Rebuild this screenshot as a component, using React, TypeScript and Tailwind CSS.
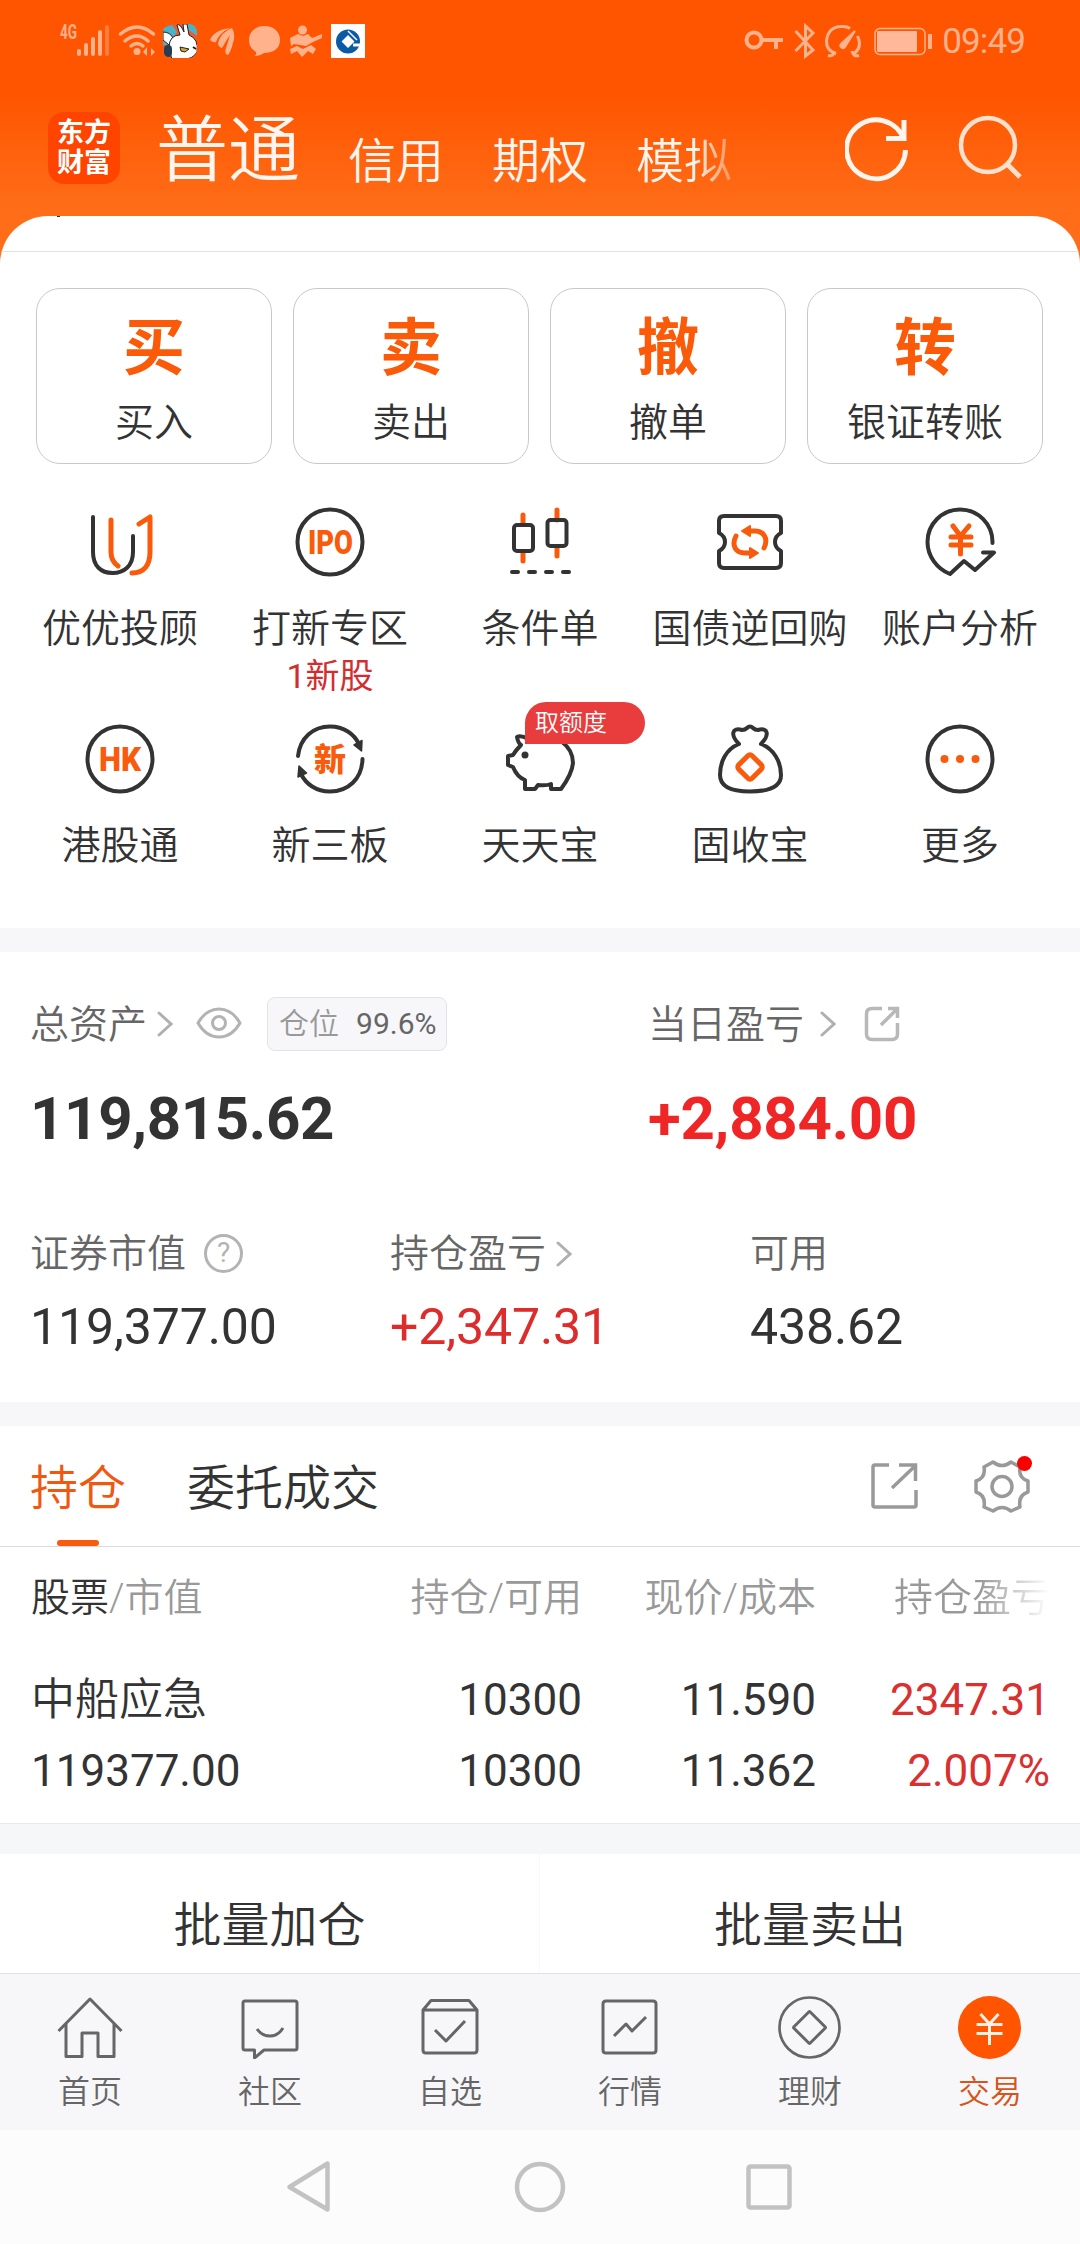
import type { ReactNode } from 'react'

const DARK = '#333333'
const ORANGE = '#f95a0b'

const quickActions = [
  { mark: '买', label: '买入' },
  { mark: '卖', label: '卖出' },
  { mark: '撤', label: '撤单' },
  { mark: '转', label: '银证转账' }
]

type Service = { label: string; note?: string; badge?: string; icon: ReactNode }

const services: Service[] = [
  {
    label: '优优投顾',
    icon: (
      <>
        <path d="M9 11V46C9 60 17 67 28.500 67S49 60 49 46V30" stroke={DARK} />
        <path d="M27 14V46Q27 55 34 60" stroke={ORANGE} strokeWidth="5" />
        <path d="M55 18L66 11V46C66 59 60 67 48 67" stroke={ORANGE} strokeWidth="5" />
      </>
    )
  },
  {
    label: '打新专区',
    note: '1新股',
    icon: (
      <>
        <circle cx="36" cy="36" r="32.500" stroke={DARK} />
        <text x="36.500" y="47.500" textAnchor="middle" fontFamily="Roboto, sans-serif" fontWeight="900" fontSize="33" textLength="45" lengthAdjust="spacingAndGlyphs" fill={ORANGE}>IPO</text>
      </>
    )
  },
  {
    label: '条件单',
    icon: (
      <>
        <path d="M19 9V17M19 47V55M53 4V14M53 42V50" stroke={ORANGE} strokeWidth="5" />
        <rect x="10" y="19" width="19" height="26" rx="3" stroke={DARK} />
        <rect x="43.500" y="14" width="19" height="26" rx="3" stroke={DARK} />
        <path d="M8 66H14M25 66H31M42 66H48M59 66H65" stroke={DARK} />
      </>
    )
  },
  {
    label: '国债逆回购',
    icon: (
      <>
        <path d="M10 10H62Q67 10 67 15V27Q61 30 61 36T67 45V57Q67 62 62 62H10Q5 62 5 57V45Q11 42 11 36T5 27V15Q5 10 10 10Z" stroke={DARK} />
        <path d="M50 42C55 32 49 25 41 25H34" stroke={ORANGE} strokeWidth="5" />
        <path d="M22 30C17 40 22 47 31 47H38" stroke={ORANGE} strokeWidth="5" />
        <path d="M36 20V30L28 25ZM36 42V52L44 47Z" fill={ORANGE} stroke={ORANGE} strokeWidth="2" />
      </>
    )
  },
  {
    label: '账户分析',
    icon: (
      <>
        <path d="M68.500 37C69 18 54 3.500 36 3.500S3.500 18 3.500 36C3.500 50 13 63 26 68L40 55L51 64L70 46.500H59" stroke={DARK} />
        <path d="M29 20L36.500 30L45 20M36.500 30V48M27 31H47M27 39H47" stroke={ORANGE} strokeWidth="5" />
      </>
    )
  },
  {
    label: '港股通',
    icon: (
      <>
        <circle cx="36" cy="36" r="32.500" stroke={DARK} />
        <text x="36" y="47.500" textAnchor="middle" fontFamily="Roboto, sans-serif" fontWeight="900" fontSize="33" textLength="42" lengthAdjust="spacingAndGlyphs" fill={ORANGE}>HK</text>
      </>
    )
  },
  {
    label: '新三板',
    icon: (
      <>
        <path d="M4 33C6 15 19 3.500 36 3.500C50 3.500 60 11 65 21" stroke={DARK} />
        <path d="M68.500 36C68 56 54 68.500 36 68.500C22 68.500 12 61 7 51" stroke={DARK} />
        <path d="M60 22L68 17.500L67.500 28ZM12.500 50L4 54L5 43Z" fill={DARK} stroke={DARK} strokeWidth="1.500" />
        <text x="36" y="47.500" textAnchor="middle" fontFamily="'Noto Sans CJK SC', sans-serif" fontWeight="900" fontSize="32" fill={ORANGE}>新</text>
      </>
    )
  },
  {
    label: '天天宝',
    badge: '取额度',
    icon: (
      <>
        <path d="M24 16Q17 12 13 14Q14 20 17 22Q12 27 9 32L4 33V42L9 44Q13 54 21 57V66H31L34 62Q42 63 47 61V66H57Q68 51 69 40Q69 27 58 19Z" stroke={DARK} />
        <circle cx="21" cy="32" r="3.500" fill={DARK} />
      </>
    )
  },
  {
    label: '固收宝',
    icon: (
      <>
        <path d="M25 21C16 12 18 4 28 7Q31 7 33 5Q36 2 39 5Q41 7 44 7C54 4 56 12 47 21C60 26 67 39 67 52C67 64 55 68.500 36 68.500S6 64 6 52C6 39 12 26 25 21Z" stroke={DARK} />
        <rect x="-9.500" y="-9.500" width="19" height="19" rx="3" transform="translate(36 44) rotate(45)" stroke={ORANGE} strokeWidth="5" />
      </>
    )
  },
  {
    label: '更多',
    icon: (
      <>
        <circle cx="36" cy="36" r="32.500" stroke={DARK} />
        <g fill={ORANGE}>
          <circle cx="20.500" cy="36" r="4" />
          <circle cx="36" cy="36" r="4" />
          <circle cx="51.500" cy="36" r="4" />
        </g>
      </>
    )
  }
]

const tabs = [
  {
    label: '首页',
    icon: <path d="M1.500 35L33 3L64.500 35M9 28V60.500H25V37H41V60.500H57V28" />
  },
  {
    label: '社区',
    icon: <path d="M8 5H58Q60 5 60 7V52Q60 54 58 54H27L17.500 62V54H8Q6 54 6 52V7Q6 5 8 5ZM20 33Q25 40 33 40T46 32" />
  },
  {
    label: '自选',
    icon: <path d="M6 14L14 4.500H52L60 14V54Q60 57 57 57H9Q6 57 6 54ZM6 14H60M18 34L29 45L48 25" />
  },
  {
    label: '行情',
    icon: <path d="M9 5H56Q59 5 59 8V54Q59 57 56 57H9Q6 57 6 54V8Q6 5 9 5ZM17 40L29 28L35 35L49 21" />
  },
  {
    label: '理财',
    icon: (
      <>
        <circle cx="32.500" cy="31.500" r="30" strokeWidth="2.700" />
        <rect x="-11.500" y="-11.500" width="23" height="23" rx="1" transform="translate(32.500 31.500) rotate(45)" />
      </>
    )
  },
  {
    label: '交易',
    active: true,
    icon: (
      <>
        <circle cx="32.500" cy="31.500" r="31.500" fill="#ff5500" stroke="none" />
        <path d="M23.500 18L32.500 28L41.500 18M32.500 28V49M19.500 28.500H45.500M19.500 37.500H45.500" stroke="#fff0e6" />
      </>
    )
  }
]

function Chevron({ className = '' }: { className?: string }) {
  return (
    <svg className={className} width="16" height="26" viewBox="0 0 16 26" fill="none" stroke="#b0b0b0" strokeWidth="3" strokeLinecap="round">
      <path d="M2 2L14 13L2 24" />
    </svg>
  )
}

function StatusBar() {
  return (
    <div className="flex h-[82px] items-center justify-between pl-[48px] pr-[55px]">
      <svg width="318" height="60" viewBox="48 11 318 60" fill="#ffb28c">
        <text x="60" y="39" fontFamily="Roboto, sans-serif" fontWeight="700" fontSize="20" textLength="17" lengthAdjust="spacingAndGlyphs">4G</text>
        <rect x="77" y="49" width="4" height="7" rx="2" />
        <rect x="84" y="43" width="4" height="13" rx="2" />
        <rect x="91" y="37" width="4" height="19" rx="2" />
        <rect x="98" y="30" width="4" height="26" rx="2" />
        <rect x="105" y="25" width="4" height="31" rx="2" opacity=".45" />
        <path d="M120.500 34Q137 20 153.500 34M125 41Q137 31 148 41M131 46Q137 41 143 46" fill="none" stroke="#ffb28c" strokeWidth="3.500" strokeLinecap="round" />
        <circle cx="137" cy="51.500" r="3.500" />
        <path d="M143 52L147 47V56ZM155 52L151 48V56Z" />
        {/* rabbit app */}
        <clipPath id="app"><rect x="163" y="24" width="34" height="34" rx="8" /></clipPath>
        <g clipPath="url(#app)">
          <rect x="163" y="24" width="34" height="34" fill="#ed5b2a" />
          <path d="M163 28L172 25L177 32L167 45H163ZM186 24H197V36L189 30Z" fill="#48b4c9" />
          <path d="M163 32Q170 32 173 38L169 45L163 40Z" fill="#fff" stroke="#222" />
          <path d="M180 35L177 25Q180 23 184 32L183 24H187L189 35Q199 39 197 52Q193 59 184 59H172Q166 45 172 38Q175 35 180 35Z" fill="#fff" stroke="#222" />
          <rect x="164" y="45" width="8" height="12" rx="4" fill="#263e55" />
          <path d="M180 47L189 49L185 52L181 51Z" fill="#d8a72a" stroke="#222" />
          <path d="M193 47L196 49" stroke="#222" strokeWidth="2" />
        </g>
        <path d="M210 40Q214 30 230 28Q219 33 216 42Q213 43 210 40ZM218 43Q221 32 232 28Q236 35 233 43Q231 51 228 55Q224 54 226 48Q228 42 230 35Q226 41 222 48Q218 47 218 43Z" />
        <path d="M264.500 26C255 26 249 32 249 40C249 45 251 49 256 52Q257 55 254 56Q260 56 264 53C274 53 280 48 280 40C280 32 274 26 264.500 26Z" />
        <circle cx="302.500" cy="30" r="4.500" />
        <path d="M290 38L298 34L303 36L308 34L312 38L322 34V38L313 42L306 46L294 44L291 46ZM290 49L297 46L303 49L311 45L316 49L313 54L308 51L302 57L297 51L291 54Z" />
        <rect x="331" y="24" width="34" height="34" fill="#fff" />
        <circle cx="348" cy="41.500" r="12" fill="#0b5aa5" />
        <path d="M348 35L354.500 41.500L348 48L341.500 41.500ZM353 43.500H362V46.500H353Z" fill="#fff" />
        <path d="M348 31L357 40" stroke="#fff" strokeWidth="1.500" />
      </svg>
      <div className="flex items-center gap-[8px]">
        <svg width="190" height="36" viewBox="744 23 190 36" fill="none" stroke="#ffb28c" strokeWidth="4">
          <circle cx="754" cy="40" r="7.500" />
          <path d="M762 40H783M776 40V49" />
          <path d="M795.500 31L813 50L805.500 56V26L813 33L795.500 51" strokeWidth="3" />
          <path d="M836 54Q826 50 826.500 41Q828 27 841 26.500Q847 26 850 28.500M857.500 36Q863 48 853 54M828 55.500Q834 57 834 51M859 55.500Q853 57 852 51" strokeWidth="3" />
          <path d="M855 31L845 47A2.500 2.500 0 1 1 841 44Z" fill="#ffb28c" strokeWidth="2" />
          <rect x="875" y="28.500" width="50" height="26" rx="5" strokeWidth="1.500" />
          <rect x="877" y="31" width="40" height="21" rx="1" fill="#ffb899" stroke="none" />
          <path d="M930 34V49" />
        </svg>
        <span className="text-[35px] leading-none tracking-[-0.9px] text-[#ffb28c]">09:49</span>
      </div>
    </div>
  )
}

function Header() {
  return (
    <header className="flex h-[134px] items-start pl-[48px] pt-[30px] text-[#fff5ee]">
      <div className="flex size-[72px] flex-col items-center justify-center rounded-[16px] bg-[#ff4400] text-[27px] font-bold leading-[30px] text-white">
        <span>东方</span>
        <span>财富</span>
      </div>
      <div className="ml-[36px] flex font-[350]">
        <span className="pt-[4px] text-[72px] leading-[70px]">普通</span>
        <div className="flex gap-[48px] pl-[48px] pt-[26px] text-[48px] leading-[48px]">
          <span>信用</span>
          <span>期权</span>
          <span className="bg-[linear-gradient(90deg,#fff5ee_60%,#ff9d66_95%)] bg-clip-text text-transparent">模拟</span>
        </div>
      </div>
      <svg className="ml-[113px] mt-[3px]" width="180" height="72" viewBox="844 115 180 72" fill="none" strokeWidth="5">
        <path d="M903 140A29.500 29.500 0 1 0 904.500 150" stroke="#fff5ee" />
        <path d="M903 120V138.500H885" stroke="#fff5ee" />
        <circle cx="987" cy="145" r="27" stroke="#ffe0cc" strokeWidth="4.500" />
        <path d="M1006 164L1019 177" stroke="#ffe0cc" />
      </svg>
    </header>
  )
}

function ServiceItem({ label, note, badge, icon }: Service) {
  return (
    <div className="relative flex flex-col items-center whitespace-nowrap font-[350]">
      <svg className="overflow-visible" width="72" height="72" viewBox="0 0 72 72" fill="none" strokeWidth="4" strokeLinecap="round" strokeLinejoin="round">
        {icon}
      </svg>
      <span className="mt-[31px] text-[39px] leading-[40px]">{label}</span>
      {note && <span className="mt-[10px] text-[34px] font-normal leading-[34px] text-[#d02f2f]">{note}</span>}
      {badge && (
        <span className="absolute left-[90px] top-[-21px] h-[42px] w-[120px] rounded-[21px] rounded-bl-none bg-[#e93c3c] pl-[10px] text-[24px] leading-[43px] text-white">
          {badge}
        </span>
      )}
    </div>
  )
}

function Assets() {
  return (
    <section className="h-[450px] px-[30px] pt-[44px] text-[39px] leading-none text-[#666]">
      <div className="flex">
        <div className="w-[618px]">
          <div className="flex h-[56px] items-center">
            <span className="pt-[2px] font-[350]">总资产</span>
            <Chevron className="ml-[10px]" />
            <svg className="mb-[2px] ml-[23px]" width="46" height="32" viewBox="0 0 46 32" fill="none" stroke="#b3b3b3" strokeWidth="3">
              <path d="M2 16Q10 2 23 2T44 16Q36 30 23 30T2 16Z" />
              <circle cx="23" cy="16" r="6.500" />
            </svg>
            <div className="ml-[25px] flex h-[54px] w-[180px] items-center rounded-[8px] border border-[#e3e3e6] bg-[#f7f7fa] pl-[11px] text-[30px]">
              <span className="font-[350] text-[#999]">仓位</span>
              <span className="ml-[17px]">99.6%</span>
            </div>
          </div>
          <div className="mt-[37px] text-[60px] font-bold leading-[60px] tracking-[-0.35px] text-[#333]">119,815.62</div>
        </div>
        <div>
          <div className="flex h-[56px] items-center">
            <span className="pt-[2px] font-[350]">当日盈亏</span>
            <Chevron className="ml-[16px]" />
            <svg className="ml-[28px]" width="36" height="36" viewBox="0 0 36 36" fill="none" stroke="#b8b8b8" strokeWidth="3.500">
              <path d="M18 2.500H8Q2.500 2.500 2.500 8V28Q2.500 33.500 8 33.500H28Q33.500 33.500 33.500 28V17M24 2.500H33.500V12M33 3L17 19" />
            </svg>
          </div>
          <div className="mt-[37px] text-[60px] font-bold leading-[60px] tracking-[-0.25px] text-[#f02626]">+2,884.00</div>
        </div>
      </div>

      <div className="mt-[85px] grid grid-cols-[360px_360px_1fr]">
        <div>
          <div className="flex h-[40px] items-center">
            <span className="font-[350]">证券市值</span>
            <span className="mb-[2px] ml-[18px] flex size-[39px] items-center justify-center rounded-full border-[3px] border-[#b3b3b3] text-[28px] text-[#b3b3b3]">?</span>
          </div>
          <div className="mt-[28px] text-[50px] tracking-[-0.1px] text-[#333]">119,377.00</div>
        </div>
        <div>
          <div className="flex h-[40px] items-center">
            <span className="font-[350]">持仓盈亏</span>
            <Chevron className="ml-[10px]" />
          </div>
          <div className="mt-[28px] text-[50px] tracking-[-0.1px] text-[#dd2c2c]">+2,347.31</div>
        </div>
        <div>
          <div className="flex h-[40px] items-center">
            <span className="font-[350]">可用</span>
          </div>
          <div className="mt-[28px] text-[50px] tracking-[-0.1px] text-[#333]">438.62</div>
        </div>
      </div>
    </section>
  )
}

function Positions() {
  return (
    <section className="h-[397px]">
      <div className="flex h-[121px] items-end justify-between border-b border-[#dcdcdc] pl-[30px] pr-[46px] text-[48px] font-[350] leading-none">
        <div className="flex gap-[61px]">
          <div className="flex flex-col items-center">
            <span className="text-[#f0570f]">持仓</span>
            <span className="mt-[27px] h-[6px] w-[42px] rounded-full bg-[#f95a0b]" />
          </div>
          <span>委托成交</span>
        </div>
        <svg className="mb-[29px]" width="164" height="62" viewBox="870 1455 164 62" fill="none" stroke="#999" strokeWidth="3.500">
          <path d="M889 1465H875Q873 1465 873 1467V1505Q873 1507 875 1507H914Q916 1507 916 1505V1490M899 1465H915.500V1481M915 1466L892 1488" />
          <path d="M984 1467L993 1462Q1002 1469 1011 1462L1020 1467Q1018 1478 1028 1481V1492Q1018 1495 1020 1507L1011 1511Q1002 1504 993 1511L984 1507Q986 1495 976 1492V1481Q986 1478 984 1467Z" strokeLinejoin="round" />
          <circle cx="1002" cy="1486.500" r="10" />
          <circle cx="1024.500" cy="1463.500" r="7.500" fill="#fb0000" stroke="none" />
        </svg>
      </div>
      <div className="grid grid-cols-[1fr_190px_234px_234px] pl-[31px] pr-[30px] text-right text-[44px] leading-none">
        <div className="text-left text-[39px] font-[350] leading-[102px] text-[#999]"><span className="text-[#333]">股票</span>/市值</div>
        <div className="text-[39px] font-[350] leading-[102px] text-[#999]">持仓/可用</div>
        <div className="text-[39px] font-[350] leading-[102px] text-[#999]">现价/成本</div>
        <div className="text-[39px] font-[350] leading-[102px]">
          <span className="bg-[linear-gradient(90deg,#999_55%,#fff_100%)] bg-clip-text text-transparent">持仓盈亏</span>
        </div>
        <div className="text-left font-[350] leading-[102px]">中船应急</div>
        <div className="leading-[102px]">10300</div>
        <div className="leading-[102px]">11.590</div>
        <div className="leading-[102px] text-[#d93030]">2347.31</div>
        <div className="text-left leading-[40px]">119377.00</div>
        <div className="leading-[40px]">10300</div>
        <div className="leading-[40px]">11.362</div>
        <div className="leading-[40px] text-[#d93030]">2.007%</div>
      </div>
    </section>
  )
}

function TabBar() {
  return (
    <nav className="grid h-[157px] grid-cols-6 border-t border-[#e0e0e2] bg-[#f7f7fa] pt-[22px]">
      {tabs.map((tab) => (
        <div key={tab.label} className="flex flex-col items-center">
          <svg width="66" height="63" viewBox="0 0 66 63" fill="none" stroke="#666" strokeWidth="3" strokeLinejoin="round">
            {tab.icon}
          </svg>
          <span className={tab.active ? 'mt-[17px] text-[32px] font-[350] leading-[32px] text-[#d4561a]' : 'mt-[17px] text-[32px] font-[350] leading-[32px] text-[#666]'}>
            {tab.label}
          </span>
        </div>
      ))}
    </nav>
  )
}

export default function App() {
  return (
    <div className="flex h-[2244px] w-[1080px] flex-col overflow-hidden bg-[linear-gradient(180deg,#ff5500_93px,#ff6d18_210px)] font-['Roboto','Noto_Sans_CJK_SC',sans-serif] text-[#333]">
      <StatusBar />
      <Header />
      <main className="flex flex-1 flex-col overflow-hidden rounded-t-[48px] bg-white">
        <div className="h-[36px] shrink-0 border-b border-[#e2e2e2] pl-[57px]">
          <div className="h-[1px] w-[3px] bg-[#333]" />
        </div>

        <div className="grid grid-cols-4 gap-[21px] pl-[36px] pr-[37px] pt-[36px]">
          {quickActions.map((action) => (
            <div key={action.label} className="flex h-[176px] flex-col items-center rounded-[24px] border border-[#c9c9c9] pt-[28px]">
              <span className="text-[62px] font-bold leading-[64px] text-[#fb5a08]">{action.mark}</span>
              <span className="mt-[22px] text-[39px] font-[350] leading-[40px]">{action.label}</span>
            </div>
          ))}
        </div>

        <div className="mt-[42px] grid h-[422px] shrink-0 grid-cols-5 grid-rows-[217px_205px] px-[15px]">
          {services.map((service) => (
            <ServiceItem key={service.label} {...service} />
          ))}
        </div>

        <div className="h-[24px] shrink-0 bg-[#f7f7fa]" />
        <Assets />
        <div className="h-[24px] shrink-0 bg-[#f7f7fa]" />
        <Positions />
        <div className="h-[31px] shrink-0 border-t border-[#e8e8ea] bg-[#f6f7f9]" />

        <div className="grid h-[119px] grid-cols-2 text-center text-[48px] font-[350] leading-[144px]">
          <div className="h-[119px] border-r border-[#f8f8f9]">批量加仓</div>
          <div>批量卖出</div>
        </div>
        <TabBar />
        <div className="flex h-[114px] justify-center bg-[#fcfcfc]">
          <svg width="510" height="114" viewBox="285 2130 510 114" fill="none" stroke="#c2c2c2" strokeWidth="4.500" strokeLinejoin="round">
            <path d="M327.500 2163.500V2209.500L289.500 2187Z" />
            <circle cx="540" cy="2187" r="23" />
            <rect x="748.500" y="2166.500" width="41" height="41" rx="2" />
          </svg>
        </div>
      </main>
    </div>
  )
}
